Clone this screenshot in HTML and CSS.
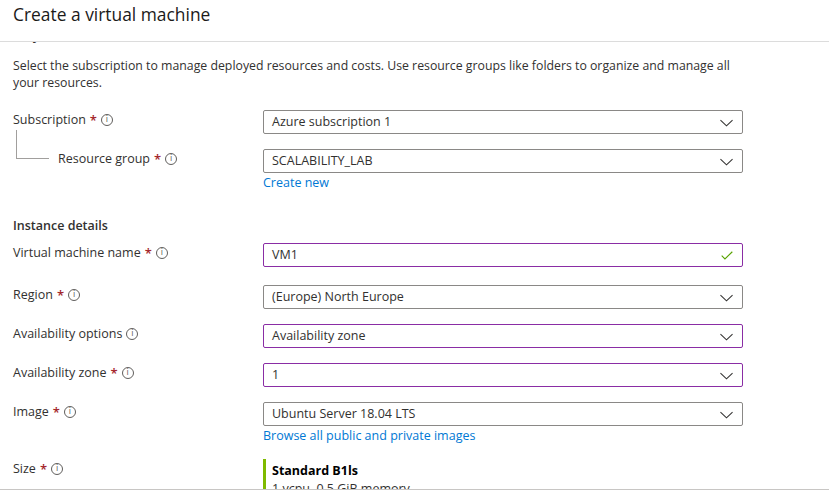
FILE: index.html
```html
<!DOCTYPE html>
<html lang="en">
<head>
<meta charset="utf-8">
<title>Create a virtual machine</title>
<link rel="stylesheet" href="styles.css">
</head>
<body>
<div class="blade">
  <header class="blade-header">
    <h1 class="blade-title">Create a virtual machine</h1>
  </header>
  <main class="blade-content">
    <div class="scroll">
      <h2 class="section-title cut">Project details</h2>
      <p class="desc">Select the subscription to manage deployed resources and costs. Use resource groups like folders to organize and manage all<br>your resources.</p>

      <div class="row">
        <div class="label">Subscription<span class="req">*</span><span class="info">i</span></div>
        <div class="control">
          <div class="select">Azure subscription 1<svg class="chev" viewBox="0 0 14 8"><path d="M0.5 0.8 L7 7 L13.5 0.8"/></svg></div>
        </div>
      </div>

      <div class="row row-link">
        <div class="label sub-label"><span class="tree"></span>Resource group<span class="req">*</span><span class="info">i</span></div>
        <div class="control">
          <div class="select">SCALABILITY_LAB<svg class="chev" viewBox="0 0 14 8"><path d="M0.5 0.8 L7 7 L13.5 0.8"/></svg></div>
          <a class="link">Create new</a>
        </div>
      </div>

      <h2 class="section-title">Instance details</h2>

      <div class="row row-vm">
        <div class="label">Virtual machine name<span class="req">*</span><span class="info">i</span></div>
        <div class="control">
          <div class="select dirty">VM1<svg class="check" viewBox="0 0 14 10"><path d="M0.8 5.2 L4.6 9 L13.2 0.6"/></svg></div>
        </div>
      </div>

      <div class="row">
        <div class="label">Region<span class="req">*</span><span class="info">i</span></div>
        <div class="control">
          <div class="select">(Europe) North Europe<svg class="chev" viewBox="0 0 14 8"><path d="M0.5 0.8 L7 7 L13.5 0.8"/></svg></div>
        </div>
      </div>

      <div class="row">
        <div class="label">Availability options<span class="info">i</span></div>
        <div class="control">
          <div class="select dirty">Availability zone<svg class="chev" viewBox="0 0 14 8"><path d="M0.5 0.8 L7 7 L13.5 0.8"/></svg></div>
        </div>
      </div>

      <div class="row">
        <div class="label">Availability zone<span class="req">*</span><span class="info">i</span></div>
        <div class="control">
          <div class="select dirty">1<svg class="chev" viewBox="0 0 14 8"><path d="M0.5 0.8 L7 7 L13.5 0.8"/></svg></div>
        </div>
      </div>

      <div class="row row-link">
        <div class="label">Image<span class="req">*</span><span class="info">i</span></div>
        <div class="control">
          <div class="select">Ubuntu Server 18.04 LTS<svg class="chev" viewBox="0 0 14 8"><path d="M0.5 0.8 L7 7 L13.5 0.8"/></svg></div>
          <a class="link">Browse all public and private images</a>
        </div>
      </div>

      <div class="row row-size">
        <div class="label">Size<span class="req">*</span><span class="info">i</span></div>
        <div class="control">
          <div class="size-card">
            <div class="size-name">Standard B1ls</div>
            <div class="size-spec">1 vcpu, 0.5 GiB memory</div>
          </div>
        </div>
      </div>
    </div>
  </main>
  <footer class="blade-footer"></footer>
</div>
</body>
</html>
```

FILE: styles.css
```css
html, body {
  margin: 0;
  padding: 0;
  background: #fff;
}
body {
  font-family: "Open Sans", "Noto Sans", "Liberation Sans", sans-serif;
  font-size: 12.5px;
  color: #323130;
}
.blade {
  height: 492px;
  display: flex;
  flex-direction: column;
  overflow: hidden;
}
.blade-header {
  height: 41px;
  border-bottom: 1px solid #dcdcdc;
  flex: none;
}
.blade-title {
  margin: 0;
  padding: 2px 13px 0;
  font-size: 17.4px;
  line-height: 24px;
  font-weight: 400;
  color: #1b1a19;
}
.blade-content {
  flex: 1;
  overflow: hidden;
  position: relative;
}
.scroll {
  padding: 0 13px;
}
.section-title {
  margin: 0;
  font-size: 12.5px;
  line-height: 18px;
  font-weight: 600;
  color: #323130;
}
.section-title.cut {
  margin-top: -15px;
}
.desc {
  margin: 12px 0 0;
  font-size: 12.3px;
  line-height: 17px;
  color: #323130;
}
.row {
  display: grid;
  grid-template-columns: 250px 480px;
  margin-bottom: 15px;
}
.desc + .row {
  margin-top: 19px;
}
.row-link {
  margin-bottom: 0;
}
.row-vm {
  margin-bottom: 18px;
}
.label {
  line-height: 18px;
  display: flex;
  align-items: center;
  height: 20px;
  white-space: nowrap;
}
.sub-label {
  position: relative;
  padding-left: 45px;
  padding-top: 0;
}
.tree {
  position: absolute;
  left: 3px;
  top: -19px;
  width: 32px;
  height: 28px;
  border-left: 1px solid #a19f9d;
  border-bottom: 1px solid #a19f9d;
}
.req {
  color: #a4262c;
  margin-left: 4px;
  font-size: 13px;
  font-weight: 600;
}
.info {
  display: inline-flex;
  align-items: center;
  justify-content: center;
  width: 10px;
  height: 10px;
  border: 1px solid #605e5c;
  border-radius: 50%;
  font-size: 8px;
  line-height: 10px;
  color: #605e5c;
  font-family: "DejaVu Sans", sans-serif;
  margin-left: 4px;
}
.select {
  position: relative;
  height: 24px;
  box-sizing: border-box;
  border: 1px solid #8a8886;
  border-radius: 2px;
  padding: 0 8px;
  line-height: 22px;
  color: #323130;
  display: flex;
  align-items: center;
}
.select.dirty {
  border-color: #8a2da5;
}
.chev {
  position: absolute;
  right: 9px;
  top: 8px;
  width: 13px;
  height: 8px;
  fill: none;
  stroke: #323130;
  stroke-width: 1.1;
}
.check {
  position: absolute;
  right: 9px;
  top: 7px;
  width: 12px;
  height: 9px;
  fill: none;
  stroke: #57a300;
  stroke-width: 1.3;
}
.link {
  display: block;
  color: #0078d4;
  line-height: 18px;
  margin-top: 1px;
  cursor: pointer;
}
.row-link + .section-title {
  margin-top: 25px;
  margin-bottom: 8px;
}
.row-link + .row-size {
  margin-top: 14px;
}
.size-card {
  border-left: 3px solid #7fba00;
  padding: 3px 0 0 6px;
  height: 40px;
}
.size-name {
  font-weight: 700;
  line-height: 18px;
  color: #000;
}
.size-spec {
  line-height: 18px;
  color: #323130;
}
.blade-footer {
  flex: none;
  height: 2px;
  border-top: 1px solid #c8c6c4;
}
```
